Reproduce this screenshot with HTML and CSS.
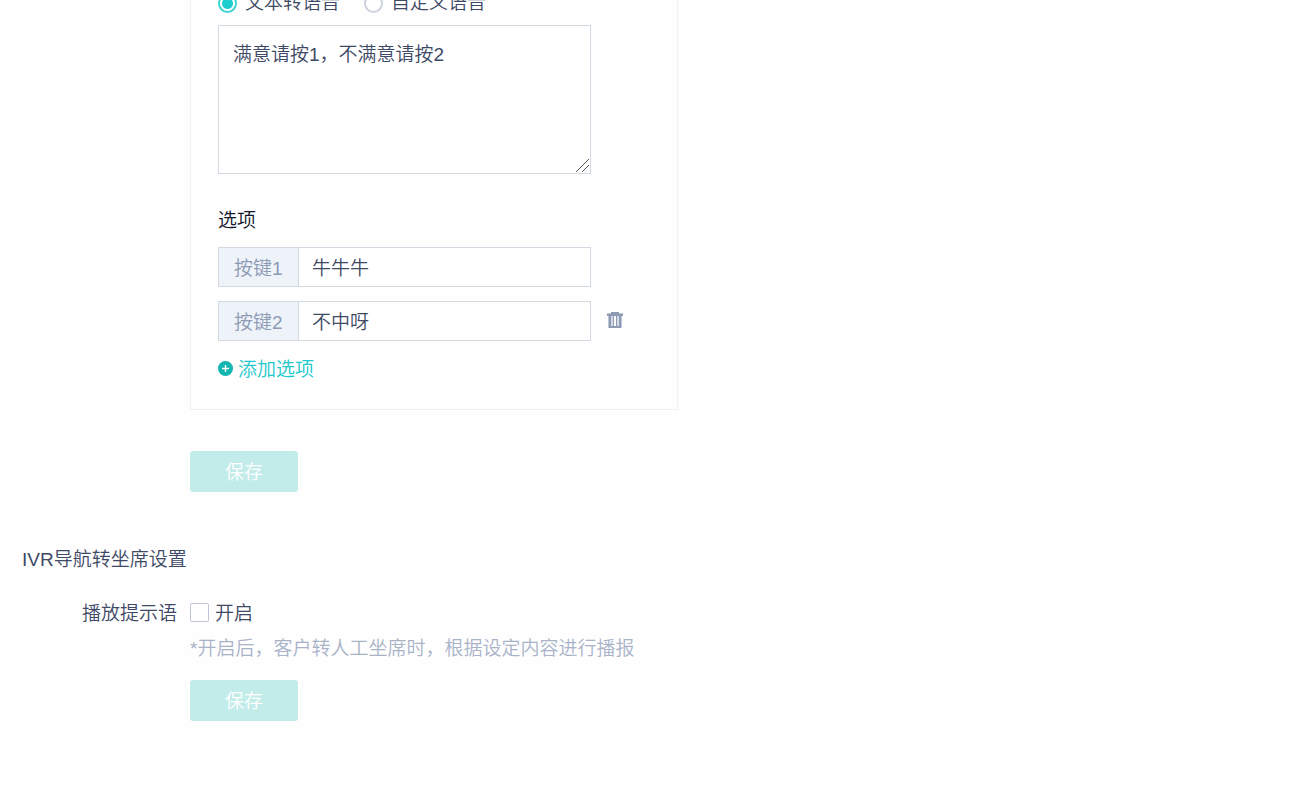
FILE: index.html
```html
<!DOCTYPE html>
<html lang="zh-CN">
<head>
<meta charset="utf-8">
<title>IVR设置</title>
<link rel="stylesheet" href="styles.css">
</head>
<body>
<main class="page">
  <form class="block">
    <section class="card">
      <div class="radios">
        <label class="choice"><input class="radio" type="radio" name="voice" checked>文本转语音</label>
        <label class="choice"><input class="radio" type="radio" name="voice">自定义语音</label>
      </div>
      <div class="editor">
        <textarea class="message" aria-label="语音文本">满意请按1，不满意请按2</textarea>
        <svg class="grip" width="13" height="13" viewBox="0 0 13 13" stroke="#555" stroke-width="1"><path d="M0 13L13 0M6 13L13 6"/></svg>
      </div>
      <h3 class="subtitle">选项</h3>
      <div class="options">
        <div class="option">
          <div class="group"><label class="prefix" for="key1">按键1</label><input class="field" id="key1" type="text" value="牛牛牛"></div>
        </div>
        <div class="option">
          <div class="group"><label class="prefix" for="key2">按键2</label><input class="field" id="key2" type="text" value="不中呀"></div>
          <button class="remove" type="button" aria-label="删除">
            <svg width="16" height="16" viewBox="0 0 16 16" fill="#8c9ab3" shape-rendering="crispEdges"><path d="M4 0h8v1h4v3h-1v12H1V4H0V1h4zM4 4v10h2V4zM7 4v10h2V4zM10 4v10h2V4z" fill-rule="evenodd"/><path d="M4 4h2v10H4zM10 4h2v10h-2z" fill-opacity=".35"/><path d="M0 1h4v1H0zM12 1h4v1h-4zM1 4h1v12H1zM14 4h1v12h-1z" fill="#fff" fill-opacity=".45"/></svg>
          </button>
        </div>
      </div>
      <button class="add" type="button">
        <svg width="15" height="15" viewBox="0 0 15 15"><circle cx="7.5" cy="7.5" r="7.5" fill="#13b5b1"/><path d="M7.5 4v7M4 7.5h7" stroke="#fff" stroke-width="1.4"/></svg>
        添加选项
      </button>
    </section>
    <button class="save" type="button">保存</button>
  </form>
  <h2 class="title">IVR导航转坐席设置</h2>
  <form class="block">
    <div class="row">
      <span class="name" id="prompt">播放提示语</span>
      <label class="toggle"><input class="check" type="checkbox" aria-describedby="prompt">开启</label>
    </div>
    <p class="hint">*开启后，客户转人工坐席时，根据设定内容进行播报</p>
    <button class="save" type="button">保存</button>
  </form>
</main>
</body>
</html>
```
FILE: styles.css
```css
* { box-sizing: border-box; }
body {
  margin: 0;
  background: #fefefe;
  color: #3e4965;
  font: 350 19px/30px "Liberation Sans", "Noto Sans CJK SC", sans-serif;
}
button, input, textarea { font: inherit; color: inherit; }
button { border: 0; padding: 0; background: none; cursor: pointer; }
.page { overflow: hidden; padding-bottom: 72px; }
.block { margin-left: 190px; }
.card {
  max-width: 488px;
  margin-top: -40px;
  padding: 28px 27px 24px;
  border: 1px solid #eff1f8;
}
.radios { display: flex; gap: 24px; height: 28px; }
.choice { display: flex; align-items: center; gap: 8px; }
.radio {
  appearance: none;
  width: 19px;
  height: 19px;
  margin: 0;
  border: 2px solid #cdd2e0;
  border-radius: 50%;
  background: #fff;
}
.radio:checked {
  border-color: #3fd5d5;
  background: radial-gradient(circle, #1ecdd0 5px, #fff 6px);
}
.editor { position: relative; width: calc(100% - 59px); margin-top: 8px; }
.message {
  display: block;
  width: 100%;
  height: 149px;
  padding: 14px;
  border: 1px solid #d3d9e0;
  background: #fff;
  resize: vertical;
}
.message::-webkit-resizer { background: transparent; }
.grip { position: absolute; right: 2px; bottom: 2px; pointer-events: none; }
.subtitle { margin: 32px 0 11px; font-size: 19px; font-weight: inherit; color: #14162a; }
.options { display: grid; gap: 14px; }
.option { display: flex; align-items: center; gap: 16px; }
.group { display: flex; width: calc(100% - 59px); height: 40px; border: 1px solid #d3d9e0; }
.prefix {
  flex: none;
  width: 80px;
  padding: 6px 0 2px 15px;
  border-right: 1px solid #d3d9e0;
  background: #eef3fa;
  color: #8c9ab3;
}
.field { flex: 1; min-width: 0; padding: 4px 13px 0; border: 0; background: #fff; }
.remove { padding-bottom: 2px; }
.remove svg { display: block; }
.add { display: flex; align-items: center; gap: 5px; margin-top: 14px; color: #20c9cb; }
.add svg { margin-bottom: 4px; }
.save {
  display: block;
  width: 108px;
  height: 41px;
  margin-top: 41px;
  padding-top: 2px;
  border-radius: 3px;
  background: #c2ecea;
  color: #fff;
}
.title { margin: 53px 0 0 22px; font-size: 19px; font-weight: inherit; }
.row { display: flex; align-items: center; gap: 13px; margin: 24px 0 0 -108px; }
.name { flex: none; }
.toggle { display: flex; align-items: center; gap: 6px; }
.check {
  appearance: none;
  width: 19px;
  height: 19px;
  margin: 0 0 4px;
  border: 1px solid #bfc6d8;
  border-radius: 2px;
  background: #fff;
}
.hint { margin: 5px 0 0; color: #a9b3c8; }
.hint + .save { margin-top: 16px; }
```
